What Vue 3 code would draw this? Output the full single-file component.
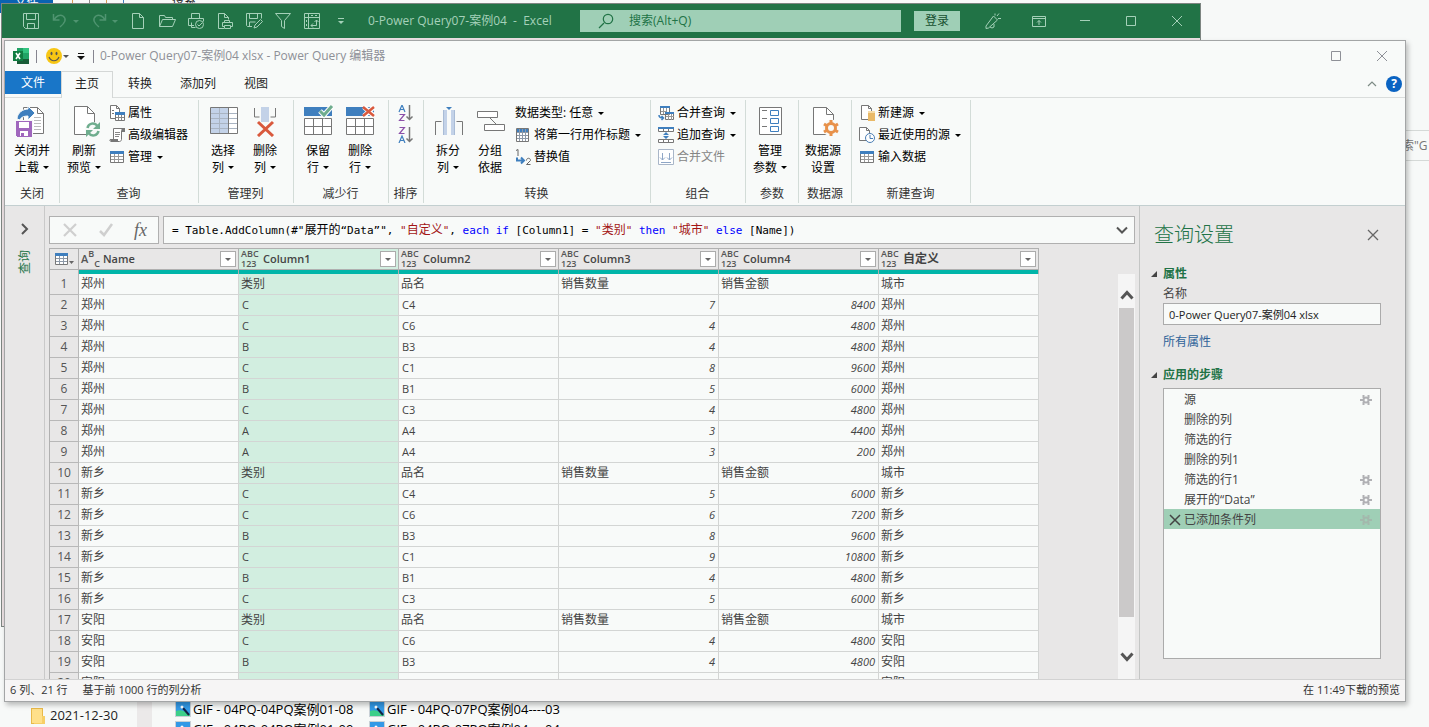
<template>
    <div class="desktop">
        <section class="explorer" aria-label="文件资源管理器">
            <div class="explorer-tabs">
                <button class="explorer-file">文件</button>
                <i class="mark orange"></i>
                <i class="mark"></i>
                <i class="mark orange"></i>
                <i class="mark blue"></i>
                <span class="explorer-tab">搜索</span>
            </div>
            <div class="explorer-search">索"G</div>
            <div class="explorer-files">
                <span class="folder">
                    <svg width="14" height="17" viewBox="0 0 14 17" v-html="icons.folder"></svg>2021-12-30
                </span>
                <span class="explorer-scroll"></span>
                <div class="file-grid">
                    <span v-for="name in files" :key="name" class="file">
                        <svg width="16" height="16" viewBox="0 0 16 16" v-html="icons.picture"></svg>{{ name }}
                    </span>
                </div>
            </div>
        </section>

        <section class="excel" aria-label="Excel">
            <header class="excel-bar">
                <div class="quick">
                    <button class="quick-btn" aria-label="保存">
                        <svg width="18" height="18" viewBox="0 0 18 18" v-html="icons.save"></svg>
                    </button>
                    <button class="split dim" aria-label="撤消">
                        <svg width="16" height="18" viewBox="0 0 16 18" v-html="icons.undo"></svg><i class="caret"></i>
                    </button>
                    <button class="split dim" aria-label="恢复">
                        <svg width="16" height="18" viewBox="0 0 16 18" v-html="icons.redo"></svg><i class="caret"></i>
                    </button>
                    <button v-for="q in quick" :key="q.icon" class="quick-btn" :aria-label="q.label">
                        <svg width="18" height="18" viewBox="0 0 18 18" v-html="icons[q.icon]"></svg>
                    </button>
                </div>
                <span class="excel-title">0-Power Query07-案例04&nbsp; -&nbsp; Excel</span>
                <label class="excel-search">
                    <svg width="16" height="16" viewBox="0 0 16 16" v-html="icons.search"></svg>
                    <input type="text" placeholder="搜索(Alt+Q)" aria-label="搜索">
                </label>
                <button class="login">登录</button>
                <button v-for="c in excelControls" :key="c.icon" class="control" :aria-label="c.label">
                    <svg width="18" height="18" viewBox="0 0 18 18" v-html="icons[c.icon]"></svg>
                </button>
            </header>
        </section>

        <main class="editor">
            <header class="title-bar">
                <svg class="app-icon" width="16" height="16" viewBox="0 0 16 16" v-html="icons.excel"></svg>
                <i class="bar"></i>
                <button class="smile" aria-label="反馈">
                    <svg width="16" height="16" viewBox="0 0 16 16" v-html="icons.smile"></svg><i class="caret"></i>
                </button>
                <button class="customize" aria-label="自定义快速访问工具栏">
                    <svg width="8" height="8" viewBox="0 0 8 8" v-html="icons.customize"></svg>
                </button>
                <i class="bar"></i>
                <h1>0-Power Query07-案例04 xlsx - Power Query 编辑器</h1>
                <button class="control" aria-label="最大化">
                    <svg width="18" height="18" viewBox="0 0 18 18" v-html="icons.maximize"></svg>
                </button>
                <button class="control" aria-label="关闭">
                    <svg width="18" height="18" viewBox="0 0 18 18" v-html="icons.close"></svg>
                </button>
            </header>

            <nav class="tabs">
                <button class="tab file-tab">文件</button>
                <button v-for="t in tabs" :key="t" class="tab" :class="{ active: t === activeTab }" @click="activeTab = t">{{ t }}</button>
                <button class="collapse" aria-label="折叠功能区">
                    <svg width="10" height="6" viewBox="0 0 10 6" v-html="icons.chevronUp"></svg>
                </button>
                <button class="help" aria-label="帮助">?</button>
            </nav>

            <div class="ribbon">
                <section v-for="g in groups" :key="g.name" class="group" :class="g.cls">
                    <div class="group-body">
                        <button v-for="b in g.big || []" :key="b.icon" class="big">
                            <svg width="32" height="32" viewBox="0 0 32 32" v-html="icons[b.icon]"></svg>
                            <span>{{ b.lines[0] }}</span>
                            <span>{{ b.lines[1] }}<i v-if="b.caret" class="caret"></i></span>
                        </button>
                        <div v-if="g.small" class="small-list">
                            <button v-for="s in g.small" :key="s.icon || s.text" class="small" :class="{ disabled: s.disabled }"
                                :disabled="s.disabled" :aria-label="s.text || s.label">
                                <svg v-if="s.icon" width="16" height="16" viewBox="0 0 16 16" v-html="icons[s.icon]"></svg>
                                <span v-if="s.text">{{ s.text }}</span>
                                <i v-if="s.caret" class="caret"></i>
                            </button>
                        </div>
                    </div>
                    <h2>{{ g.name }}</h2>
                </section>
            </div>

            <div class="workspace">
                <aside class="rail">
                    <button aria-label="展开查询">
                        <svg width="10" height="14" viewBox="0 0 10 14" v-html="icons.chevronRight"></svg>
                    </button>
                    <span>查询</span>
                </aside>

                <div class="center">
                    <div class="formula-row">
                        <div class="formula-tools">
                            <button aria-label="取消">
                                <svg width="16" height="16" viewBox="0 0 16 16" v-html="icons.cancel"></svg>
                            </button>
                            <button aria-label="确认">
                                <svg width="16" height="16" viewBox="0 0 16 16" v-html="icons.confirm"></svg>
                            </button>
                            <button class="fx" aria-label="添加步骤">fx</button>
                        </div>
                        <div class="formula">
                            <code><span v-for="(p, i) in formula" :key="i" :class="p[0]">{{ p[1] }}</span></code>
                            <button aria-label="展开公式栏">
                                <svg width="12" height="8" viewBox="0 0 12 8" v-html="icons.chevronDown"></svg>
                            </button>
                        </div>
                    </div>

                    <div class="grid-row">
                        <div class="grid">
                            <table>
                                <thead>
                                    <tr>
                                        <th class="corner">
                                            <div class="head">
                                                <button aria-label="表选项">
                                                    <svg width="22" height="14" viewBox="0 0 22 14" v-html="icons.tableMenu"></svg>
                                                </button>
                                            </div>
                                            <div class="quality"></div>
                                        </th>
                                        <th v-for="(c, i) in columns" :key="c" :class="{ selected: i === 1, han: i === 5 }">
                                            <div class="head">
                                                <span v-if="i === 0" class="type-text"><b>A</b><b>B</b><b>C</b></span>
                                                <span v-else class="type-any"><b>ABC</b><b>123</b></span>
                                                <span class="label">{{ c }}</span>
                                                <button class="filter" :aria-label="c + ' 筛选'"><i class="caret"></i></button>
                                            </div>
                                            <div class="quality"></div>
                                        </th>
                                    </tr>
                                </thead>
                                <tbody>
                                    <tr v-for="(r, n) in rows" :key="n">
                                        <th scope="row">{{ n + 1 }}</th>
                                        <td v-for="(v, i) in r" :key="i" :class="{ selected: i === 1, number: typeof v === 'number', han: isHan(v) }">{{ v }}</td>
                                    </tr>
                                </tbody>
                            </table>
                        </div>
                        <div class="scrollbar">
                            <button aria-label="向上滚动">
                                <svg width="14" height="10" viewBox="0 0 14 10" v-html="icons.scrollUp"></svg>
                            </button>
                            <div class="thumb"></div>
                            <button aria-label="向下滚动">
                                <svg width="14" height="10" viewBox="0 0 14 10" v-html="icons.scrollDown"></svg>
                            </button>
                        </div>
                    </div>
                </div>

                <aside class="settings">
                    <div class="settings-head">
                        <h2>查询设置</h2>
                        <button aria-label="关闭查询设置">
                            <svg width="12" height="12" viewBox="0 0 12 12" v-html="icons.closePane"></svg>
                        </button>
                    </div>
                    <h3><i class="tri"></i>属性</h3>
                    <label for="query-name">名称</label>
                    <input id="query-name" v-model="queryName" type="text">
                    <a href="#">所有属性</a>
                    <h3><i class="tri"></i>应用的步骤</h3>
                    <ul class="steps">
                        <li v-for="s in steps" :key="s.name" :class="{ current: s.current }">
                            <span class="remove">
                                <svg v-if="s.current" width="12" height="12" viewBox="0 0 12 12" v-html="icons.remove"></svg>
                            </span>
                            <span class="step-name">{{ s.name }}</span>
                            <button v-if="s.gear" :aria-label="s.name + ' 设置'">
                                <svg width="12" height="12" viewBox="0 0 12 12" v-html="icons.gear"></svg>
                            </button>
                        </li>
                    </ul>
                </aside>
            </div>

            <footer class="status">
                <span>6 列、21 行</span>
                <span>基于前 1000 行的列分析</span>
                <span class="preview">在 11:49下载的预览</span>
            </footer>
        </main>
    </div>
</template>

<script setup>
import { ref } from 'vue'

const tabs = ['主页', '转换', '添加列', '视图']
const activeTab = ref('主页')
const queryName = ref('0-Power Query07-案例04 xlsx')

const files = [
    'GIF - 04PQ-04PQ案例01-08',
    'GIF - 04PQ-07PQ案例04----03',
    'GIF - 04PQ-04PQ案例01-09',
    'GIF - 04PQ-07PQ案例04----04'
]

const quick = [
    { icon: 'newFile', label: '新建' },
    { icon: 'open', label: '打开' },
    { icon: 'print', label: '快速打印' },
    { icon: 'printDoc', label: '打印预览' },
    { icon: 'saveAs', label: '另存为' },
    { icon: 'funnel', label: '筛选' },
    { icon: 'pivot', label: '数据透视表' },
    { icon: 'more', label: '自定义快速访问工具栏' }
]

const excelControls = [
    { icon: 'pen', label: '新功能' },
    { icon: 'display', label: '功能区显示选项' },
    { icon: 'minimize', label: '最小化' },
    { icon: 'maximize', label: '最大化' },
    { icon: 'close', label: '关闭' }
]

const groups = [
    { name: '关闭', cls: 'g-close', big: [{ icon: 'closeLoad', lines: ['关闭并', '上载'], caret: true }] },
    {
        name: '查询', cls: 'g-query',
        big: [{ icon: 'refresh', lines: ['刷新', '预览'], caret: true }],
        small: [{ icon: 'props', text: '属性' }, { icon: 'script', text: '高级编辑器' }, { icon: 'table', text: '管理', caret: true }]
    },
    {
        name: '管理列', cls: 'g-pair',
        big: [{ icon: 'chooseCols', lines: ['选择', '列'], caret: true }, { icon: 'removeCols', lines: ['删除', '列'], caret: true }]
    },
    {
        name: '减少行', cls: 'g-pair',
        big: [{ icon: 'keepRows', lines: ['保留', '行'], caret: true }, { icon: 'removeRows', lines: ['删除', '行'], caret: true }]
    },
    { name: '排序', cls: 'g-sort', small: [{ icon: 'sortAz', label: '升序排序' }, { icon: 'sortZa', label: '降序排序' }] },
    {
        name: '转换', cls: 'g-transform',
        big: [{ icon: 'splitCol', lines: ['拆分', '列'], caret: true }, { icon: 'groupBy', lines: ['分组', '依据'] }],
        small: [{ text: '数据类型: 任意', caret: true }, { icon: 'headers', text: '将第一行用作标题', caret: true }, { icon: 'replace', text: '替换值' }]
    },
    {
        name: '组合', cls: 'g-combine',
        small: [{ icon: 'merge', text: '合并查询', caret: true }, { icon: 'append', text: '追加查询', caret: true }, { icon: 'combine', text: '合并文件', disabled: true }]
    },
    { name: '参数', cls: 'g-single', big: [{ icon: 'params', lines: ['管理', '参数'], caret: true }] },
    { name: '数据源', cls: 'g-single', big: [{ icon: 'source', lines: ['数据源', '设置'] }] },
    {
        name: '新建查询', cls: 'g-new',
        small: [{ icon: 'newSource', text: '新建源', caret: true }, { icon: 'recent', text: '最近使用的源', caret: true }, { icon: 'table', text: '输入数据' }]
    }
]

const formula = [
    ['', '= Table.AddColumn(#"'], ['cn', '展开的'], ['', '“Data”", '],
    ['str', '"'], ['str cn', '自定义'], ['str', '"'], ['', ', '],
    ['key', 'each if'], ['', ' [Column1] = '],
    ['str', '"'], ['str cn', '类别'], ['str', '"'], ['key', ' then '],
    ['str', '"'], ['str cn', '城市'], ['str', '"'], ['key', ' else '], ['', '[Name])']
]

const columns = ['Name', 'Column1', 'Column2', 'Column3', 'Column4', '自定义']
const title = (city) => [city, '类别', '品名', '销售数量', '销售金额', '城市']
const rows = [
    title('郑州'),
    ['郑州', 'C', 'C4', 7, 8400, '郑州'],
    ['郑州', 'C', 'C6', 4, 4800, '郑州'],
    ['郑州', 'B', 'B3', 4, 4800, '郑州'],
    ['郑州', 'C', 'C1', 8, 9600, '郑州'],
    ['郑州', 'B', 'B1', 5, 6000, '郑州'],
    ['郑州', 'C', 'C3', 4, 4800, '郑州'],
    ['郑州', 'A', 'A4', 3, 4400, '郑州'],
    ['郑州', 'A', 'A4', 3, 200, '郑州'],
    title('新乡'),
    ['新乡', 'C', 'C4', 5, 6000, '新乡'],
    ['新乡', 'C', 'C6', 6, 7200, '新乡'],
    ['新乡', 'B', 'B3', 8, 9600, '新乡'],
    ['新乡', 'C', 'C1', 9, 10800, '新乡'],
    ['新乡', 'B', 'B1', 4, 4800, '新乡'],
    ['新乡', 'C', 'C3', 5, 6000, '新乡'],
    title('安阳'),
    ['安阳', 'C', 'C6', 4, 4800, '安阳'],
    ['安阳', 'B', 'B3', 4, 4800, '安阳'],
    ['安阳', 'C', 'C1', 5, 6000, '安阳']
]
const isHan = (v) => /[\u4e00-\u9fff]/.test(v)

const steps = [
    { name: '源', gear: true },
    { name: '删除的列' },
    { name: '筛选的行' },
    { name: '删除的列1' },
    { name: '筛选的行1', gear: true },
    { name: '展开的“Data”', gear: true },
    { name: '已添加条件列', gear: true, current: true }
]

// shared table bodies: small 16px and large 32px
const smallTable = '<path fill="#fff" stroke="#777" d="M1.500 3.500h13v10h-13z"/><path fill="none" stroke="#9a9a9a" d="M5.500 5v8M9.500 5v8M2 7.500h12M2 10.500h12"/><path fill="#3f7fbe" d="M1 2h14v3H1z"/>'
const rowTable = '<path fill="#fff" stroke="#777" d="M2.500 13.500h27v16h-27z"/><path fill="none" stroke="#777" d="M11.500 14v16M20.500 14v16M2 21.500h28"/><path fill="#3f7fbe" d="M2 2h28v9H2z"/>'
const line = (d, w = 1) => `<path fill="none" stroke="currentColor" stroke-width="${w}" d="${d}"/>`
const gearPath = (c, x, y) => `<g fill="none" stroke="${c}" stroke-width="3" transform="translate(${x} ${y})"><circle r="4.500"/><path d="M0-5V-8M0 5V8M-4.500-2.500-7-4M4.500 2.500 7 4M-4.500 2.500-7 4M4.500-2.500 7-4"/></g>`

const icons = {
    folder: '<path fill="#e8b94a" d="M0 1h12v16H0z"/><path fill="#ffe08a" d="M1 2h10v14H1z"/><path fill="#f7cf66" d="M11 9h3v8H3v-1h8z"/>',
    picture: '<path fill="#c8d0d6" d="M0 0h16v16H0z"/><path fill="#3399e6" d="M1 1h14v14H1z"/><path fill="#3ccf8a" d="M1 10c5-2 9 1 14 3v2H1z"/><path fill="none" stroke="#124" stroke-width="2" d="m8 7 6 7"/><circle cx="7" cy="6" r="1.500" fill="#fff"/>',
    save: line('M1.500 1.500h15v15H3.500l-2-2zM4.500 1.500v6h9v-6M5.500 16.500v-5h7v5'),
    undo: line('M1.500 2v6h6M2 8c2-4 6-6 9-4 4 3 2 7-3 11', 1.5),
    redo: line('M14.500 2v6h-6M14 8c-2-4-6-6-9-4-4 3-2 7 3 11', 1.5),
    newFile: line('M3.500 1.500h7l4 4v11h-11zM10.500 1.500v4h4'),
    open: line('M1.500 14.500v-11h5l1 2h7v2M1.500 14.500l3-7h13l-3 7z'),
    print: line('M4.500 6.500v-5h8v5M7 13.500H1.500v-7h15v3M4.500 10.500v5h4') + '<circle cx="12.500" cy="12.500" r="4" fill="#217346" stroke="currentColor"/>' + line('m10.500 12.500 1.500 1.500 3-3'),
    printDoc: line('M8 16.500H2.500v-15h6l4 4v2M8.500 1.500v4h4M8.500 11v-2.500h5V11M8 14.500H6.500v-4h10v4H15M8.500 13.500h6v3h-6z'),
    saveAs: line('M7 14.500H2.500l-1-1v-12h15v5M4.500 1.500v5h8v-5M4.500 14v-4h6M9 16l1-3 5.500-5.500 2 2L12 15z'),
    funnel: line('M1.500 1.500h15l-6 7v8l-3-2v-6z'),
    pivot: line('M1.500 1.500h15v15h-15zM1.500 5.500h15M5.500 1.500v15M8 3.500h2M12 3.500h2M3.500 8v2M3.500 12v2M8 13.500h5.500V8M10 11.500l-2 2 2 2M11.500 10l2-2 2 2'),
    more: line('M6 6.500h6') + '<path fill="currentColor" d="M6 9h6l-3 3z"/>',
    search: line('M1 15l5-5', 1.3) + '<circle cx="10" cy="6" r="4.700" fill="none" stroke="currentColor" stroke-width="1.200"/>',
    pen: line('M2 14 9.500 4l4 4-9 8-2.500.500zM6 15l2 1 2-1v-3M11 3.500V1.500M13 4l2-2.500M14 6.500h3'),
    display: line('M2.500 4.500h13v10h-13zM2.500 6.500h13M9 13V8.500M7 10.500l2-2 2 2'),
    minimize: line('M4 8.500h10'),
    maximize: line('M4.500 4.500h9v9h-9z'),
    close: line('m4 4 10 10M14 4 4 14'),
    excel: '<path fill="#21a366" d="M4 0h12v16H4z"/><path fill="#33c481" d="M10 0h6v5h-6z"/><path fill="#107c41" d="M4 5h6v6H4z"/><path fill="#185c37" d="M4 11h12v5H4z"/><path fill="#107c41" d="M0 3h10v10H0z"/><path fill="none" stroke="#fff" stroke-width="1.600" d="m3 5 4 6M7 5l-4 6"/>',
    smile: '<circle cx="8" cy="8" r="8" fill="#f7c614"/><ellipse cx="5.500" cy="5.500" rx="1" ry="1.700" fill="#555"/><ellipse cx="10.500" cy="5.500" rx="1" ry="1.700" fill="#555"/><path fill="none" stroke="#555" stroke-width="1.200" d="M3 9c2 5 8 5 10 0"/>',
    customize: '<path fill="#111" d="M1 1h6v1H1zM0 4h8L4 8z"/>',
    chevronUp: line('m1 5 4-4 4 4', 1.2),
    chevronRight: line('m2 2 5 5-5 5', 2),
    chevronDown: line('m1 1.500 5 5 5-5', 2),
    scrollUp: line('m1.500 8.500 5.500-6 5.500 6', 3),
    scrollDown: line('m1.500 1.500 5.500 6 5.500-6', 3),
    closeLoad: '<path fill="#fff" stroke="#777" d="M7.500 2.500h14l6 6v20h-20z"/><path fill="none" stroke="#777" d="M21.500 2.500v6h6"/><path stroke="#bbb" d="M18 12.500h7M18 15.500h7M18 18.500h7M18 21.500h7M18 24.500h7"/><path fill="#3f7fbe" stroke="#f8faf9" d="M1 14c0-6 6-10 11-10V1l7 7-7 7v-4c-4 0-7 1-8 4z"/><path fill="#a067bd" stroke="#f8faf9" d="M-.500 15.500h17v17h-15l-2-2z"/><path fill="#fff" d="M3 17h10v6H3zM4 26h8v5H4z"/><path fill="#a067bd" d="M5 28h3v3H5z"/>',
    refresh: '<path fill="#fff" stroke="#777" d="M6.500 1.500h13l7 7v21h-20z"/><path fill="none" stroke="#777" d="M19.500 1.500v7h7"/><circle cx="25" cy="25" r="8" fill="#f8faf9"/><path fill="none" stroke="#6fad8e" stroke-width="2.500" d="M19.500 23c1-5 7-6 10-2M30.500 26c-1 5-7 6-10 2"/><path fill="#6fad8e" d="M32 17v7h-7zM18 32v-7h7z"/>',
    props: '<path fill="#fff" stroke="#777" d="M1.500.500h6l3 3v10h-9z"/><path fill="none" stroke="#777" d="M3 5.500h2M3 8.500h2M7.500.500v3h3"/><path fill="#fff" stroke="#777" d="M6.500 7.500h9v8h-9z"/><path stroke="#888" d="M9.500 9v6M12.500 9v6M7 12.500h8"/><path fill="#3f7fbe" d="M6 7h10v3H6z"/>',
    script: '<path fill="#fff" stroke="#777" d="M4.500 1.500h10c-1 0-2 1-2 2v9c0 1-1 2-2 2h-8c-2 0-2-2-1-2h3z"/><path fill="#777" d="M1 12h8v3H2zM13 1h3v4h-3z"/><path stroke="#888" d="M6 5.500h5M6 7.500h5M6 9.500h4"/>',
    table: smallTable,
    chooseCols: '<path fill="#fff" d="M3 3h27v26H3z"/><path fill="#c3d2e8" d="M3 3h18v26H3z"/><path fill="none" stroke="#a9b4c2" d="M3 8.500h27M3 13.500h27M3 18.500h27M3 23.500h27M12.500 3v26"/><path fill="none" stroke="#777" d="M3.500 2.500h27v26h-27zM21.500 3v26"/>',
    removeCols: '<path fill="#c3d2e8" d="M12 2h8v15h-8z"/><path fill="none" stroke="#777" d="M5.500 3v9h5M26.500 3v9h-5"/><path fill="none" stroke="#d9593d" stroke-width="3" d="m9 17 15 14M24 17 9 31"/>',
    keepRows: rowTable + '<path fill="none" stroke="#fff" stroke-width="5" d="m18 6 4 4 8-9"/><path fill="none" stroke="#6fad8e" stroke-width="3" d="m18 6 4 4 8-9"/>',
    removeRows: rowTable + '<path fill="none" stroke="#fff" stroke-width="5" d="m20 2 10 9M30 2l-10 9"/><path fill="none" stroke="#d9593d" stroke-width="2.500" d="m19 2 11 9M30 2l-11 9"/>',
    sortAz: '<g fill="none" stroke-width="1.200"><path stroke="#3f7fbe" d="m1 7 3-7 3 7M2 4.500h4"/><path stroke="#8b4fa8" d="M1.500 9.500h5l-5 6h5"/><path stroke="#777" stroke-width="1.500" d="M11.500 0v14M8.500 11.500l3 3 3-3"/></g>',
    sortZa: '<g fill="none" stroke-width="1.200"><path stroke="#8b4fa8" d="M1.500.500h5l-5 6h5"/><path stroke="#3f7fbe" d="m1 16 3-7 3 7M2 13.500h4"/><path stroke="#777" stroke-width="1.500" d="M11.500 0v14M8.500 11.500l3 3 3-3"/></g>',
    splitCol: '<path fill="#c3d2e8" d="M11 5h4v25h-4zM19 5h4v25h-4z"/><path fill="none" stroke="#a9bcd6" d="M11.500 5v25M22.500 5v25"/><path fill="none" stroke="#777" d="M3.500 30V16.500h6M30.500 30V16.500h-6"/><path fill="#3f7fbe" d="M14 2h6l-3 3z"/>',
    groupBy: '<path fill="#fff" stroke="#777" d="M3.500 6.500h20v6h-20zM10.500 19.500h20v6h-20z"/><path stroke="#777" d="m16 13 6 6"/>',
    headers: '<path fill="#fff" stroke="#777" d="M1.500 1.500h12v13h-12z"/><path fill="#3f7fbe" d="M2 2h11v3H2z"/><path fill="none" stroke="#8d99a8" d="M4.500 2v12M7.500 2v12M10.500 2v12M2 5.500h11M2 8.500h11M2 11.500h11"/>',
    replace: '<path fill="none" stroke="#666" d="m1 1.500 2-1V7"/><path fill="none" stroke="#3f7fbe" stroke-width="2" d="M2 8.500v3h6M6 8.500l3 3-3 3"/><path fill="none" stroke="#666" d="M11.500 11.500c0-3 4-3 4 0l-4 4h4"/>',
    merge: '<path fill="#fff" stroke="#777" d="M2.500 1.500h9v8h-9zM7.500 7.500h8v7h-8z"/><path fill="#3f7fbe" d="M2 1h10v2H2zM7 7h9v2H7z"/><path stroke="#999" d="M5.500 3v6M8.500 3v4M3 6.500h6M10.500 9v6M13.500 9v6M8 11.500h8"/><path fill="none" stroke="#3f7fbe" stroke-width="1.500" d="M1 10c0 2 1 3 4 3M3.500 11l2 2-2 2"/>',
    append: '<path fill="#fff" stroke="#777" d="M.500 1.500h15v3H.500zM.500 12.500h15v3H.500z"/><path fill="#3f7fbe" d="M0 0h16v2H0z"/><path stroke="#777" d="M5.500 2v3M10.500 2v3M5.500 12v3M10.500 12v3"/><path fill="#3f7fbe" d="M8 5l3 3H5zM8 12l3-3H5z"/>',
    combine: '<path fill="#fff" stroke="#a9b6c8" d="M.500.500h15v15H.500z"/><path fill="none" stroke="#8ea6c6" d="M4.500 4v7M2 8.500 4.500 11 7 8.500M11.500 4v7M9 8.500l2.500 2.500L14 8.500M3 13.500h10"/>',
    params: '<path fill="#fff" stroke="#777" d="M5.500 2.500h22v27h-22z"/><path fill="none" stroke="#777" d="M8 5.500h5M8 13.500h5M8 21.500h5"/><path fill="none" stroke="#3f7fbe" d="M16.500 5.500h8v5h-8zM16.500 13.500h8v5h-8zM16.500 21.500h8v5h-8z"/>',
    source: '<path fill="#fff" stroke="#777" d="M6.500 2.500h13l7 7v20h-20z"/><path fill="none" stroke="#777" d="M19.500 2.500v7h7"/><circle cx="24" cy="23" r="8.500" fill="#f8faf9"/>' + gearPath('#e8914a', 24, 23),
    newSource: '<path fill="#fff" stroke="#777" d="M2.500.500h7l3 3v11h-10z"/><path fill="none" stroke="#777" d="M9.500.500v3h3"/><path fill="#e9b967" d="M9 6h7v10H9z"/><path fill="#f6dca8" d="M9 6h7v2H9z"/>',
    recent: '<path fill="#fff" stroke="#777" d="M.500.500h7l3 3v10H.500z"/><path fill="none" stroke="#777" d="M7.500.500v3h3"/><circle cx="11" cy="11" r="4.500" fill="#fff" stroke="#4a7eb5"/><path fill="none" stroke="#4a7eb5" d="M11 8v3.500h3"/>',
    cancel: line('m2 2 12 12M14 2 2 14', 2.2),
    confirm: line('m2 9 4 4 8-11', 2.5),
    tableMenu: '<path fill="#fff" stroke="#777" d="M1.500 1.500h12v11h-12z"/><path fill="none" stroke="#8d99a8" d="M5.500 4v8M9.500 4v8M2 6.500h11M2 9.500h11"/><path fill="#3f7fbe" d="M1 1h13v3H1z"/><path fill="#666" d="M15 9h5l-2.500 3z"/>',
    closePane: line('m1 1 10 10M11 1 1 11', 1.3),
    remove: line('m1 1 10 10M11 1 1 11', 1.5),
    gear: '<circle cx="6" cy="6" r="2.500" fill="none" stroke="currentColor" stroke-width="2"/>' + line('M0 6h3M9 6h3M3.500 1v3M8.500 1v3M3.500 8v3M8.500 8v3', 2)
}
</script>

<style>
body {
    margin: 0;
    overflow: hidden;
}
</style>

<style scoped>
.desktop {
    position: relative;
    height: 100vh;
    overflow: hidden;
    background: #f7f9f8;
    color: #1e1e1e;
    font: 12px/16px "Open Sans", "Noto Sans CJK SC", sans-serif;
}

* {
    box-sizing: border-box;
}

button,
input {
    margin: 0;
    padding: 0;
    border: 0;
    border-radius: 0;
    background: none;
    color: inherit;
    font: inherit;
}

h1,
h2,
h3,
ul {
    margin: 0;
    padding: 0;
    font: inherit;
    list-style: none;
}

svg {
    display: block;
    flex: none;
}

.caret {
    display: inline-block;
    flex: none;
    border: 3px solid transparent;
    border-top-color: currentColor;
    border-bottom: 0;
}

/* file explorer behind the windows */
.explorer {
    position: absolute;
    inset: 0;
    display: flex;
    flex-direction: column;
}

.explorer-tabs {
    display: flex;
    height: 13px;
    overflow: hidden;
    font-size: 12px;
}

.explorer-file {
    width: 53px;
    margin-right: 19px;
    padding-bottom: 8px;
    background: #0a63b1;
    color: #fff;
    line-height: 4px;
}

.mark {
    width: 1px;
    height: 3px;
    margin-right: 16px;
    background: #8a8a8a;
}

.mark.orange {
    background: #d99a52;
}

.mark.blue {
    background: #3f7fbe;
}

.explorer-tab {
    margin-left: 32px;
    line-height: 0;
}

.explorer-search {
    align-self: flex-end;
    width: 29px;
    height: 31px;
    margin-top: 117px;
    overflow: hidden;
    border: solid #d5d9d7;
    border-width: 1px 0;
    padding-left: 2px;
    color: #777;
    line-height: 29px;
    white-space: nowrap;
}

.explorer-files {
    display: flex;
    height: 27px;
    margin-top: auto;
    padding-left: 31px;
    overflow: hidden;
    font-size: 13px;
}

.folder {
    display: flex;
    width: 106px;
    gap: 5px;
    padding-top: 7px;
}

.explorer-scroll {
    width: 15px;
    margin-right: 23px;
    background: #ebe9e9;
}

.file-grid {
    display: grid;
    grid-template-columns: 194px 194px;
    grid-auto-rows: 20px;
    padding-top: 1px;
    color: #000;
}

.file {
    display: flex;
    gap: 2px;
    white-space: nowrap;
}

/* excel window */
.excel {
    position: absolute;
    inset: 3px 228px 100px 1px;
    border: 1px solid #7d8581;
    background: #eadfe1;
}

.excel-bar {
    display: flex;
    align-items: center;
    height: 34px;
    background: #217346;
    color: #a5d1b9;
}

.quick {
    display: flex;
    width: 366px;
    padding-left: 14px;
}

.quick-btn {
    display: grid;
    place-items: center;
    width: 29px;
    height: 36px;
}

.split {
    display: flex;
    align-items: center;
    gap: 5px;
    width: 39px;
    padding-left: 7px;
}

.dim {
    color: #4f9470;
}

.excel-title {
    width: 212px;
    white-space: nowrap;
}

.excel-search {
    display: flex;
    flex: 1;
    align-items: center;
    gap: 15px;
    height: 22px;
    margin-right: 13px;
    padding-left: 18px;
    background: #9fcfb6;
    color: #217346;
}

.excel-search input {
    flex: 1;
    min-width: 0;
    outline: none;
}

.excel-search input::placeholder {
    color: #217346;
}

.login {
    width: 46px;
    height: 20px;
    margin-right: 10px;
    background: #9fcfb6;
    color: #174f31;
}

.control {
    display: grid;
    flex: none;
    place-items: center;
    width: 46px;
}

/* power query window */
.editor {
    position: absolute;
    inset: 40px 23px 25px 4px;
    display: flex;
    flex-direction: column;
    border: 1px solid #a3a5a6;
    background: #f8faf9;
    box-shadow: 2px 3px 5px #00000040;
}

.title-bar {
    display: flex;
    flex: none;
    align-items: center;
    height: 30px;
    padding-left: 8px;
    color: #8e9097;
}

.title-bar h1 {
    flex: 1;
    padding-left: 6px;
    font-size: 12px;
}

.bar {
    width: 1px;
    height: 13px;
    background: #85858f;
}

.app-icon {
    margin-right: 7px;
}

.smile {
    display: flex;
    align-items: center;
    gap: 1px;
    margin: 0 8px 0 9px;
    color: #555;
}

.customize {
    margin-right: 8px;
}

.tabs {
    display: flex;
    flex: none;
    height: 27px;
    border-bottom: 1px solid #dadddc;
}

.tab {
    height: 27px;
    padding: 0 14px 2px;
}

.tab.active {
    margin-right: 1px;
    border: 1px solid #d4d7d6;
    border-bottom: 0;
    padding: 0 13px 2px;
    background: #f8faf9;
}

.file-tab {
    width: 56px;
    height: 23px;
    padding: 0;
    background: #1976c8;
    color: #fff;
}

.collapse {
    margin-left: auto;
    padding: 0 9px;
    color: #7d8b85;
}

.help {
    width: 16px;
    height: 16px;
    margin: 5px 3px 0 0;
    border-radius: 50%;
    background: #0a63c2;
    color: #fff;
    font-weight: 700;
    line-height: 16px;
}

.ribbon {
    display: flex;
    flex: none;
    height: 108px;
    border-bottom: 1px solid #c3cfd0;
    padding: 2px 0;
    color: #000;
}

.group {
    display: flex;
    flex: none;
    flex-direction: column;
    width: 95px;
    border-right: 1px solid #d3dcd8;
    padding-left: 3px;
}

.group h2 {
    height: 20px;
    padding-right: 4px;
    color: #333;
    line-height: 22px;
    text-align: center;
}

.group-body {
    display: flex;
    flex: 1;
}

.g-close {
    width: 55px;
    padding-left: 0;
}

.g-close .group-body {
    justify-content: center;
}

.g-close h2,
.g-single h2 {
    padding-right: 0;
}

.g-query {
    width: 139px;
}

.g-sort {
    width: 35px;
}

.g-sort .small {
    padding-left: 6px;
}

.g-transform {
    width: 227px;
}

.g-combine {
    padding-left: 3px;
}

.g-single {
    width: 53px;
    padding-left: 0;
}

.g-single .group-body {
    padding-left: 3px;
}

.g-new {
    width: 119px;
}

.big {
    display: flex;
    flex-direction: column;
    align-items: center;
    width: 42px;
    padding-top: 5px;
    line-height: 17px;
    white-space: nowrap;
}

.big svg {
    margin-bottom: 5px;
}

.big .caret {
    margin-left: 4px;
    vertical-align: 3px;
}

.small-list {
    padding: 2px 0 0 4px;
}

.g-sort .small-list {
    padding-left: 0;
}

.small {
    display: flex;
    align-items: center;
    gap: 3px;
    height: 22px;
    white-space: nowrap;
}

.small .caret {
    margin-left: 2px;
}

.small.disabled {
    color: #858585;
}

/* body */
.workspace {
    display: flex;
    flex: 1;
    min-height: 0;
    background: #e8e7e7;
}

.rail {
    display: flex;
    flex: none;
    flex-direction: column;
    align-items: center;
    gap: 14px;
    width: 40px;
    border-right: 1px solid #c9c9c9;
    padding-top: 16px;
    color: #555;
}

.rail span {
    color: #217346;
    writing-mode: vertical-rl;
    text-orientation: sideways;
    transform: rotate(180deg);
}

.center {
    display: flex;
    flex: 1;
    flex-direction: column;
    gap: 4px;
    min-width: 0;
    padding: 10px 4px 0;
}

.formula-row {
    display: flex;
    flex: none;
    gap: 4px;
    height: 28px;
}

.formula-tools,
.formula {
    display: flex;
    align-items: center;
    border: 1px solid #b0b0b0;
    background: #f8faf9;
}

.formula-tools {
    justify-content: space-between;
    width: 110px;
    padding: 0 11px 0 12px;
    color: #cfcfcf;
}

.fx {
    color: #666;
    font: italic 18px/20px "Liberation Serif", serif;
}

.formula {
    flex: 1;
    justify-content: space-between;
    min-width: 0;
    padding: 0 6px 0 8px;
    color: #555;
}

.formula code {
    color: #000;
    font: 11px/16px "DejaVu Sans Mono", "Noto Sans CJK SC", monospace;
    white-space: pre;
}

.formula .str {
    color: #a31515;
}

.formula .key {
    color: #00f;
}

.formula .cn {
    font-size: 12px;
}

.grid-row {
    display: flex;
    flex: 1;
    justify-content: space-between;
    min-height: 0;
}

.grid {
    min-width: 0;
    overflow: hidden;
}

table {
    width: 990px;
    border-spacing: 0;
    border-left: 1px solid #b0b0b0;
    table-layout: fixed;
    color: #444;
    font-size: 11px;
    line-height: 20px;
}

th,
td {
    padding: 0;
    text-align: left;
}

thead th {
    height: 26px;
    border-right: 1px solid #b0b0b0;
}

.corner {
    width: 29px;
}

.head {
    display: flex;
    align-items: center;
    height: 22px;
    border: solid #b0b0b0;
    border-width: 1px 0;
    padding: 0 2px;
    font-size: 12px;
}

.corner .head {
    padding-left: 4px;
}

.quality {
    height: 4px;
    background: #00b5a9;
}

.corner .quality {
    background: #e8e7e7;
}

.label {
    flex: 1;
    font-size: 11px;
    font-weight: 600;
}

.han .label {
    font-size: 12px;
    font-weight: 700;
}

.type-any,
.type-text {
    display: flex;
    flex: none;
    width: 22px;
    color: #555;
    font-size: 9px;
    line-height: 10px;
}

.type-any {
    flex-direction: column;
}

.type-any b,
.type-text b {
    font-weight: 600;
}

.type-text {
    align-items: center;
    height: 20px;
}

.type-text b:first-child {
    font-size: 11px;
}

.type-text b:nth-child(2) {
    align-self: flex-start;
}

.type-text b:last-child {
    align-self: flex-end;
}

.filter {
    display: grid;
    place-items: center;
    width: 16px;
    height: 16px;
    border: 1px solid #ababab;
    background: #fff;
    color: #666;
}

tbody th {
    height: 21px;
    border: solid #b8b8b8;
    border-width: 0 1px 1px 0;
    color: #555;
    font-size: 12px;
    font-weight: 400;
    text-align: center;
}

td {
    border: solid #d3d5d4;
    border-width: 0 1px 1px 0;
    padding: 0 3px;
    background: #f8faf9;
}

td.number {
    font-style: italic;
    text-align: right;
}

td.han {
    padding: 0 2px;
    font-size: 12px;
    line-height: 18px;
}

.selected {
    background: #d2eee0;
}

.scrollbar {
    display: flex;
    flex: none;
    flex-direction: column;
    align-items: center;
    width: 17px;
    margin: 26px 0 0;
    background: #f5f5f5;
    color: #555;
}

.scrollbar button {
    display: grid;
    flex: none;
    place-items: center;
    height: 44px;
}

.scrollbar button:first-child {
    height: 34px;
    padding-top: 8px;
}

.thumb {
    width: 15px;
    flex: 1;
    margin-bottom: 18px;
    background: #cbc9c9;
}

.settings {
    display: flex;
    flex: none;
    flex-direction: column;
    width: 266px;
    border-left: 1px solid #c4c6c5;
    padding: 14px 24px 20px 23px;
    color: #444;
}

.settings-head {
    display: flex;
    align-items: center;
    justify-content: space-between;
    height: 30px;
    margin: 0 2px 16px -9px;
    color: #666;
}

.settings-head h2 {
    color: #217346;
    font-size: 20px;
    font-weight: 300;
    line-height: 28px;
}

.settings h3 {
    display: flex;
    align-items: center;
    gap: 6px;
    margin-left: -12px;
    color: #217346;
    font-weight: 700;
}

.tri {
    width: 0;
    height: 0;
    border-bottom: 6px solid #444;
    border-left: 6px solid transparent;
}

.settings label {
    margin: 4px 0 1px;
}

.settings input {
    flex: none;
    height: 22px;
    border: 1px solid #ababab;
    padding: 0 5px;
    background: #f8faf9;
    color: #222;
    font-size: 11px;
}

.settings a {
    margin: 9px 0 17px;
    color: #2f6399;
    text-decoration: none;
}

.steps {
    flex: 1;
    margin-top: 5px;
    border: 1px solid #ababab;
    background: #f8faf9;
}

.steps li {
    display: flex;
    align-items: center;
    height: 20px;
    padding: 2px 8px 0 5px;
}

.remove {
    width: 15px;
}

.step-name {
    flex: 1;
}

.steps button {
    color: #b0b0b4;
}

.steps .current {
    background: #9fcfb6;
}

.steps .current button {
    color: #a3b8ac;
}

.status {
    display: flex;
    flex: none;
    gap: 15px;
    height: 22px;
    border-top: 1px solid #d2d2d2;
    padding: 0 5px;
    background: #f6f5f5;
    color: #333;
    font-size: 11px;
    line-height: 20px;
}

.preview {
    margin-left: auto;
}
</style>
